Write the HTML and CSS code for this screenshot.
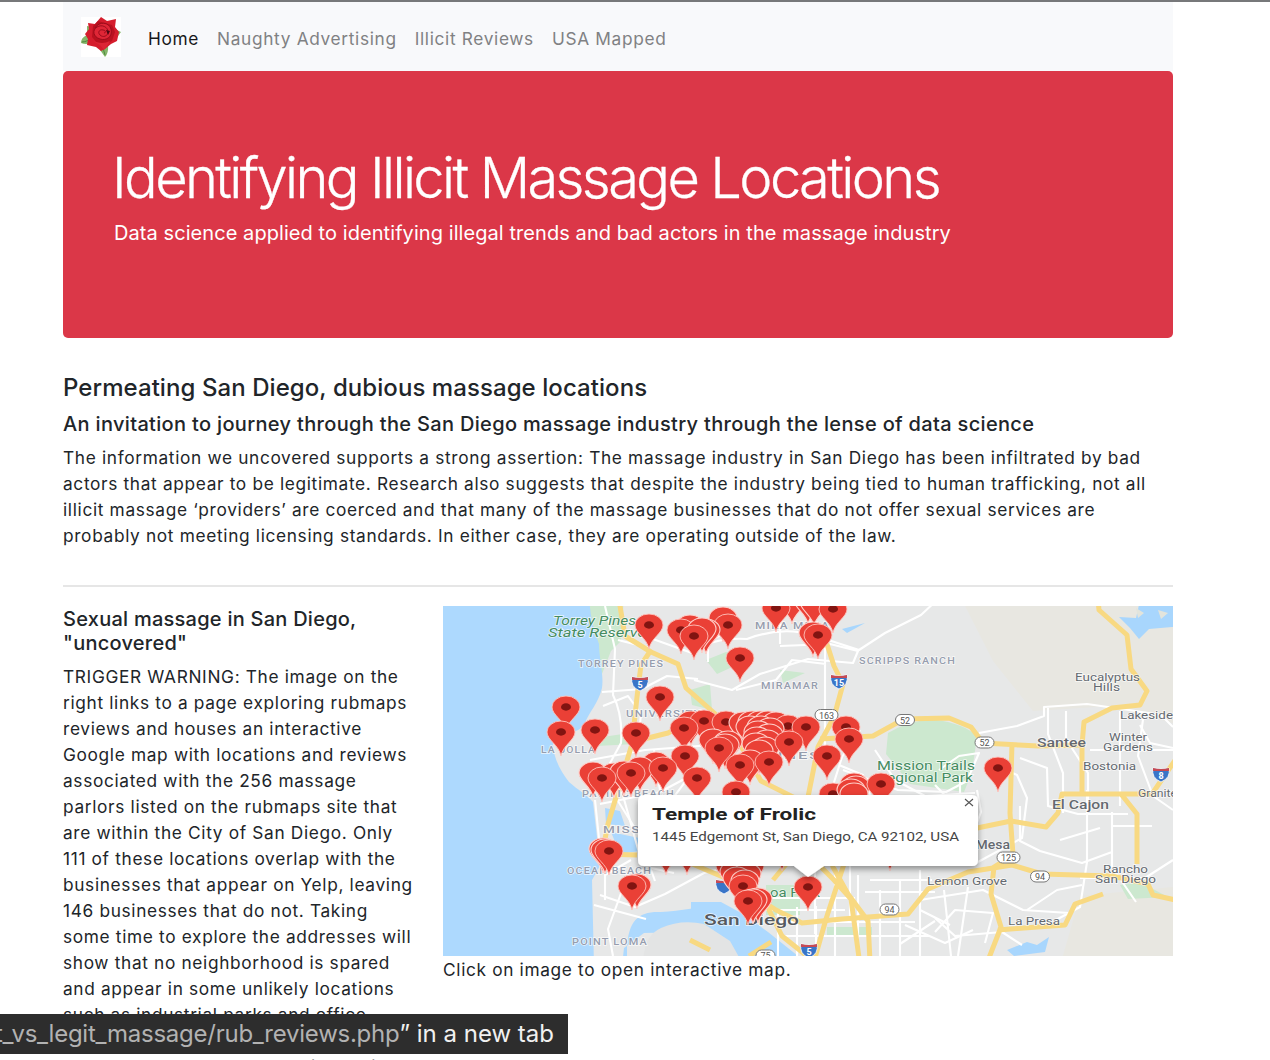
FILE: index.html
```html
<!DOCTYPE html>
<html lang="en">
<head>
<meta charset="utf-8">
<title>Identifying Illicit Massage Locations</title>
<link rel="stylesheet" href="styles.css">
</head>
<body>
<div class="container">
  <nav class="navbar">
    <a class="brand" href="#">
      <svg width="40" height="40" viewBox="0 0 40 40">
        <rect width="40" height="40" fill="#fff"/>
        <path d="M12 10 6 9l0 7 8 1zM10 18C5 17 0 21 0 26c5 2 10 1 13-3zM20 29l-1 4 5 7c4-4 3-11 3-13zM34 12l6 3-3 4-4-1z" fill="#86b66a"/>
        <path d="M1 25c4 0 7-2 10-5M22 31l2 7" stroke="#4d8a40" fill="none"/>
        <path d="M7 6l7 1 6-7 6 4 9-2-1 8 4 5-2 9-6 3-6 5-4 2-5-4-9-2 1-6-3-5 4-5z" fill="#d51d2d"/>
        <path d="M12 9l5-5 7 2 7 2 3 7-3 9-6 3-9-1-5-6z" fill="#b9111f"/>
        <path d="M14 11c4-7 14-6 16 1 2 8-5 12-11 10-7-2-8-9-3-12 5-3 11 0 11 5 0 4-5 6-8 3-3-3 0-6 3-5 3 0 3 3 1 3" fill="#df2636" stroke="#9b0c1b"/>
        <path d="M25 13l4 1-2 4z" fill="#4c0712"/>
        <path d="M12 24c5 2 11 3 17 0l-3 5-3 4-4-5z" fill="#dc2635"/>
      </svg>
    </a>
    <a class="link active" href="#">Home</a>
    <a class="link" href="#">Naughty Advertising</a>
    <a class="link" href="#">Illicit Reviews</a>
    <a class="link" href="#">USA Mapped</a>
  </nav>
  <header class="jumbotron">
    <h1>Identifying Illicit Massage Locations</h1>
    <p>Data science applied to identifying illegal trends and bad actors in the massage industry</p>
  </header>
  <section class="intro">
    <h2>Permeating San Diego, dubious massage locations</h2>
    <h3>An invitation to journey through the San Diego massage industry through the lense of data science</h3>
    <p>The information we uncovered supports a strong assertion: The massage industry in San Diego has been infiltrated by bad<br>actors that appear to be legitimate. Research also suggests that despite the industry being tied to human trafficking, not all<br>illicit massage ‘providers’ are coerced and that many of the massage businesses that do not offer sexual services are<br>probably not meeting licensing standards. In either case, they are operating outside of the law.</p>
  </section>
  <hr>
  <section class="row">
    <div class="story">
      <h3>Sexual massage in San Diego,<br>"uncovered"</h3>
      <p>TRIGGER WARNING: The image on the<br>right links to a page exploring rubmaps<br>reviews and houses an interactive<br>Google map with locations and reviews<br>associated with the 256 massage<br>parlors listed on the rubmaps site that<br>are within the City of San Diego. Only<br>111 of these locations overlap with the<br>businesses that appear on Yelp, leaving<br>146 businesses that do not. Taking<br>some time to explore the addresses will<br>show that no neighborhood is spared<br>and appear in some unlikely locations<br>such as industrial parks and office<br>buildings.<br>Lastly, the Yelp map and reviews will</p>
    </div>
    <figure class="map">
      <svg viewBox="443 606 730 350" width="730" height="350">
        <defs>
          <g id="pin"><path d="M0 24C-2 13-14 8-14 0a14 11 0 0 1 28 0C14 8 2 13 0 24z" fill="#ea4036" stroke="#ffc3bc" stroke-width=".9"/><ellipse rx="5" ry="3.7" fill="#811411"/></g>
          <g id="pinb"><path d="M0 24C-2 13-14 8-14 0a14 11 0 0 1 28 0C14 8 2 13 0 24z" fill="#ea4036" stroke="#ffd0ca" stroke-width="1.1"/></g>
          <g id="shield"><path d="M-8-6Q0-4 8-6Q10 4 0 8Q-10 4-8-6z" fill="#3975c8" stroke="#fff" stroke-width=".8"/><path d="M-8-6Q0-4 8-6V-3H-8z" fill="#c64a54"/></g>
          <filter id="shadow" x="-10%" y="-20%" width="120%" height="160%"><feDropShadow dx="0" dy="3" stdDeviation="3" flood-opacity=".4"/></filter>
        </defs>
        <g class="terrain">
        <rect x="433" y="596" width="750" height="370" fill="#e7e8e8"/>
        <path d="M960 596h223v130l-70-20-80 5-40-50zM1060 966l20-70 103-10v80z" fill="#e8e7e1"/>
        <g fill="#cce8cf">
          <path d="M588 596h36l-3 45-10 10-11 28-8-20z"/>
          <path d="M888 733q20-12 44-14 35 5 45 18l-5 35-8 20-54-8-24-30z"/>
          <path d="M706 660l20-8 26 6-35 16zM690 690l20-6 2 26-20-5zM596 738l40-6v12l-40 2z"/>
          <path d="M766 885h34v30h-34zM827 927h45v8h-45zM1120 885l20-3 28 15-40 2zM780 670l25 3-22 10z"/>
        </g>
        <path d="M433 596h156q1 25 10 48c0 15 5 30 3 44-4 16-13 24-17 35-5 12-30 11-32 18-1 15 8 31 16 41 9 8 17 12 24 20l4 35 5 25-10 18 2 86H433z" fill="#add9fe"/>
        <path d="M605 808l15 3 5 15-19-2zM611 832l28 6v13l-19 3zM627 966v-20c2-25 11-35 34-34 20-1 39-6 58-6l10 10 20 12 45 28v10h-60l-20-20-30-14-40 1-20 15-2 18z" fill="#add9fe"/>
        <path d="M691 902h30l22 12 25 18 30 24v10h-45l-28-28-34-13z" fill="#add9fe"/>
        <path d="M643 966q0-30 18-38 20-9 43-4l26 17 14 25z" fill="#e3e4e4"/>
        <path d="M1119 617l17 1 5-22h42v30l-34 3-10 10-9-11zM1007 950l20-8 10 3 12-8-4 15-31 4zM842 629l23-6-18 10z" fill="#a8d6fd"/>
        <path d="M1136 608l8 5-6 5zM1158 610l10 3-7 6z" fill="#e2e4dc"/>
        <g fill="none" stroke="#fff" stroke-width="2.1" stroke-linejoin="round">
          <path d="M605 606l10 43-2 46q10 20 8 48l-12 22 4 28 25 40 17 48M602 692l40-3 25-13 31 3M590 760l55-10 67-5M618 640l32 8M603 706l25-10 13 18-3 30"/>
          <path d="M650 638l42 15q20-16 55-14 34-13 66-4l46 15 26-17 36-18 16-15M694 680l38 10 28-16 48-15 45 4 5-12-28-7-50 2M780 644v-28l22-10M825 626v122M708 662v-20l25-14M736 690l40-10 16-20 34 4"/>
          <path d="M843 770l55 20 48 2 21-11 12-28-20 3-20 14M979 733l38-7 27-10v-9l43-3 42 6 32 5 12 12M1048 707v27l15 39v40M1066 711v28l22 34v38M1120 711v95M1144 712l-6 44 15 40 20 14M1090 750h83M1020 758l27 10 1 38 30 8h50M990 763l27 12 10 23-5 40-44 24"/>
          <path d="M1020 806v35l20 10 42 12 30-11v-26h40M1087 790v72l-7 45-26 14M1112 812v55l24 35M1080 878h65l28-18M920 900l63-10 40 20 46 3M935 918l20 18 47-4 20 13M944 890l7 66M968 887l-10 69M900 880v76M920 870v86M880 890v66M858 875v81M835 850v106M816 906v50M797 907v49M778 910v46M765 898h90M765 910h80M780 922h135M785 936h145M870 880h62M865 892h70M815 864v70M850 856v60M600 895l35 12 30-13 39-21 40-10M594 905l52 14M605 900v-25l26-15M613 956l-5-27 16-44 23-18 27 6M600 804l60-12 30-16M595 800l7 68M622 792l18 64M660 790l-6-40M693 771l-20 27M875 750l20 30 30 16 50-3M860 730l-18 27-12 38M839 765l24 10 7 20M960 776v20l-22 3"/>
          <path d="M935 932l20-22 38 3-8 30M920 910l30 15M905 925l40 18 28-13M900 944l35-23M977 790l4 22-6 16M935 785l20 21M1140 725l10 18 23 5M1060 840l40-12M1027 910l30-20 25-5"/>
        </g>
        <g fill="none" stroke="#f8d982" stroke-width="5" stroke-linejoin="round">
          <path d="M619 600l6 36 26 16 27 12 8 24 26 23 18 16 31 54 40 20 24 30 8 36 15 27 20 27 2 40"/>
          <path d="M651 650l-10 15-4 32-5 47-24 80-6 30 35 1M632 742l36-9 38-20M826 641l8 25 9 18-9 33-16 30-10 50-10 53-25 30"/>
          <path d="M820 739l53-3 31-17 45-1 22 9 12 16 55 3 44-1 2-23 28-14 28-3 7-14-16-22-4-34-28-25-1-11 10-17-5-12M1012 743l-2 70 3 42-19 12-3 27 10 33-14 36"/>
          <path d="M865 841l64-3 82-17 35 6 12-14 4-19h90l28-41M1082 745v48M1121 794l16 20v50M690 940l20 10M690 863l40 17 46 30 26 13 40-4 66-5 20-25 40-17 44-7 30 9 70 2 36 8 5 11 45 10 20-4M998 930l67-5 10-21 28-10"/>
          <path d="M804 850l30 30 17 19 9 66M844 864l-18 55-13 46M748 876l20 32 14 28 25 20M771 942l-22 14M735 780l24 30"/>
        </g>
        </g>
        <g class="map-label">
          <g class="park" font-style="italic"><text x="553" y="625" textLength="83">Torrey Pines</text><text x="548" y="636.5" textLength="98">State Reserve</text></g>
          <g class="park"><text x="877" y="770" textLength="98">Mission Trails</text><text x="887" y="781.5" textLength="86">egional Park</text><text x="770" y="897" textLength="50">oa Park</text></g>
          <g class="area">
            <text x="578" y="667" textLength="86">TORREY PINES</text><text x="626" y="717" textLength="76">UNIVERSITY</text><text x="541" y="753" textLength="55">LA JOLLA</text><text x="755" y="629" textLength="75">MIRA MESA</text><text x="859" y="664" textLength="97">SCRIPPS RANCH</text><text x="761" y="689" textLength="58">MIRAMAR</text><text x="582" y="797" textLength="93">PACIFIC BEACH</text><text x="603" y="833" textLength="65">MISSION</text><text x="567" y="874" textLength="85">OCEAN BEACH</text><text x="572" y="945" textLength="76">POINT LOMA</text><text x="767" y="759" textLength="54">LINES</text>
          </g>
          <g class="town"><text x="1075" y="680.5" textLength="65">Eucalyptus</text><text x="1093" y="690.5" textLength="27">Hills</text><text x="1120" y="718.5" textLength="53">Lakeside</text><text x="1109" y="741" textLength="38">Winter</text><text x="1103" y="751" textLength="50">Gardens</text><text x="1083" y="770" textLength="53">Bostonia</text><text x="1138" y="797" textLength="39">Granite</text><text x="1103" y="872.5" textLength="45">Rancho</text><text x="1095" y="882.5" textLength="61">San Diego</text><text x="927" y="885" textLength="80">Lemon Grove</text><text x="1008" y="925" textLength="52">La Presa</text></g>
          <g class="city"><text x="1037" y="747" textLength="49">Santee</text><text x="1052" y="809" textLength="57">El Cajon</text><text x="957" y="848.5" textLength="53">La Mesa</text></g>
          <text class="metro" x="704" y="925" textLength="95">San Diego</text>
        </g>
        <g class="route">
          <g><rect x="815" y="709.5" width="23" height="11" rx="5.5"/><text x="826.5" y="718.5">163</text></g>
          <g><rect x="895.5" y="714.5" width="19" height="11" rx="5.5"/><text x="905" y="723.5">52</text></g>
          <g><rect x="975" y="737" width="19" height="11" rx="5.5"/><text x="984.5" y="746">52</text></g>
          <g><rect x="997" y="852" width="23" height="11" rx="5.5"/><text x="1008.5" y="861">125</text></g>
          <g><rect x="1030.5" y="871" width="19" height="11" rx="5.5"/><text x="1040" y="880">94</text></g>
          <g><rect x="880" y="904" width="19" height="11" rx="5.5"/><text x="889.5" y="913">94</text></g>
          <g><rect x="756" y="950" width="19" height="11" rx="5.5"/><text x="765.5" y="959">75</text></g>
        </g>
        <g class="interstate"><use href="#shield" x="640" y="683"/><text x="640" y="688">5</text><use href="#shield" x="839" y="681"/><text x="839" y="686">15</text><use href="#shield" x="1161" y="774"/><text x="1161" y="779">8</text><use href="#shield" x="809" y="950"/><text x="809" y="955">5</text><use href="#shield" x="724" y="886"/></g>
        <g>
          <use href="#pinb" x="792" y="600"/><use href="#pinb" x="808" y="600"/><use href="#pinb" x="814" y="602"/><use href="#pin" x="776" y="608"/><use href="#pin" x="833" y="609"/>
          <use href="#pinb" x="723" y="618"/><use href="#pin" x="728" y="625"/><use href="#pinb" x="690" y="626"/><use href="#pin" x="681" y="630"/><use href="#pinb" x="706" y="630"/><use href="#pinb" x="702" y="629"/><use href="#pin" x="694" y="636"/>
          <use href="#pin" x="649" y="625"/><use href="#pinb" x="813" y="633"/><use href="#pin" x="818" y="635"/><use href="#pin" x="740" y="658"/><use href="#pin" x="660" y="697"/>
          <use href="#pin" x="566" y="707"/><use href="#pin" x="561" y="732"/><use href="#pin" x="595" y="730"/><use href="#pin" x="636" y="733"/>
          <use href="#pinb" x="691" y="722"/><use href="#pin" x="704" y="721"/><use href="#pin" x="684" y="728"/><use href="#pin" x="726" y="722"/>
          <use href="#pinb" x="743" y="723"/><use href="#pinb" x="752" y="722"/><use href="#pinb" x="760" y="722"/><use href="#pinb" x="768" y="722"/><use href="#pinb" x="776" y="723"/><use href="#pin" x="788" y="726"/>
          <use href="#pinb" x="750" y="727"/><use href="#pinb" x="761" y="727"/><use href="#pinb" x="770" y="729"/><use href="#pinb" x="758" y="732"/><use href="#pinb" x="769" y="735"/><use href="#pinb" x="757" y="738"/><use href="#pinb" x="767" y="741"/><use href="#pinb" x="756" y="744"/><use href="#pinb" x="765" y="748"/><use href="#pinb" x="759" y="751"/>
          <use href="#pin" x="806" y="727"/><use href="#pin" x="846" y="727"/><use href="#pin" x="849" y="739"/><use href="#pin" x="789" y="742"/>
          <use href="#pinb" x="713" y="740"/><use href="#pinb" x="728" y="742"/><use href="#pinb" x="725" y="745"/><use href="#pin" x="719" y="748"/><use href="#pinb" x="750" y="761"/><use href="#pin" x="740" y="765"/><use href="#pin" x="769" y="762"/><use href="#pin" x="827" y="756"/>
          <use href="#pin" x="685" y="756"/><use href="#pinb" x="656" y="763"/><use href="#pinb" x="640" y="768"/><use href="#pin" x="663" y="768"/><use href="#pinb" x="593" y="773"/><use href="#pinb" x="614" y="774"/><use href="#pinb" x="624" y="772"/><use href="#pin" x="631" y="773"/><use href="#pin" x="602" y="778"/><use href="#pin" x="697" y="778"/>
          <use href="#pin" x="736" y="792"/><use href="#pin" x="833" y="794"/><use href="#pinb" x="854" y="784"/><use href="#pinb" x="856" y="787"/><use href="#pinb" x="851" y="790"/><use href="#pinb" x="854" y="794"/><use href="#pin" x="881" y="784"/><use href="#pin" x="998" y="768"/>
          <use href="#pinb" x="603" y="849"/><use href="#pinb" x="605" y="850"/><use href="#pin" x="609" y="851"/><use href="#pinb" x="637" y="885"/><use href="#pin" x="632" y="886"/>
          <use href="#pinb" x="666" y="851"/><use href="#pinb" x="687" y="851"/><use href="#pinb" x="782" y="847"/><use href="#pinb" x="890" y="847"/>
          <use href="#pinb" x="730" y="866"/><use href="#pinb" x="750" y="866"/><use href="#pinb" x="734" y="872"/><use href="#pinb" x="747" y="874"/><use href="#pinb" x="737" y="878"/><use href="#pinb" x="745" y="881"/><use href="#pin" x="743" y="886"/><use href="#pinb" x="758" y="899"/><use href="#pinb" x="753" y="900"/><use href="#pin" x="748" y="901"/><use href="#pin" x="808" y="887"/>
        </g>
        <path filter="url(#shadow)" d="M644 795H972q6 0 6 6V860q0 6-6 6H824L808 877 794 866H644q-6 0-6-6V801q0-6 6-6z" fill="#fff"/>
        <g class="popup"><text class="title" x="652" y="820" textLength="164">Temple of Frolic</text><text class="addr" x="652" y="840.5" textLength="307">1445 Edgemont St, San Diego, CA 92102, USA</text></g>
        <path d="M965 799l8 7M973 799l-8 7" stroke="#555" stroke-width="1.1"/>
      </svg>
      <figcaption>Click on image to open interactive map.</figcaption>
    </figure>
  </section>
</div>
<div class="status"><span>t_vs_legit_massage/rub_reviews.php</span>” in a new tab</div>
<script src="labels.js"></script>
</body>
</html>
```
FILE: labels.js
```js
// Map labels stretch their glyphs horizontally to fill their assigned length.
document.querySelectorAll('text[textLength]').forEach(function (label) {
  label.setAttribute('lengthAdjust', 'spacingAndGlyphs');
});
```
FILE: styles.css
```css
* { box-sizing: border-box; }
html { height: 1060px; overflow: hidden; }
body { margin: 0; height: 1060px; overflow: hidden; border-top: 2px solid #77787a; background: #fff; color: #212529; font-family: Inter, "Liberation Sans", sans-serif; font-size: 17.3px; line-height: 26px; letter-spacing: .66px; white-space: nowrap; }
h1, h2, h3, p, figure { margin: 0; }
.container { width: 1110px; margin-left: 63px; }
.navbar { display: flex; align-items: center; height: 69px; padding: 4px 18px 0; background: #f8f9fb; }
.brand { display: block; height: 40px; margin: -3px 27px 0 0; }
.brand svg { display: block; }
.link { margin-right: 18px; color: #808183; text-decoration: none; }
.link.active { color: #17181a; }
.jumbotron { height: 267px; padding: 74px 49px 0; background: #db3748; border-radius: 5px; color: #fff; }
h1 { font-size: 56px; font-weight: 300; line-height: 67px; letter-spacing: -2.63px; -webkit-text-stroke: .3px #fff; }
.jumbotron p { margin: 5px 0 0 2px; font-size: 20px; line-height: 32px; letter-spacing: .07px; }
.intro { padding-top: 35px; }
h2 { font-size: 24px; font-weight: 500; line-height: 30px; letter-spacing: .07px; }
h3 { font-size: 20px; font-weight: 500; line-height: 24px; letter-spacing: .33px; }
.story h3 { letter-spacing: .25px; margin-bottom: 9px; }
.intro h3 { margin: 9px 0; }
hr { height: 2px; margin: 36px 0 19px; border: 0; background: #e6e6e6; }
.row { display: flex; gap: 30px; }
.story { width: 350px; padding-top: 1px; }
.map svg { display: block; }
.map figcaption { padding-top: 1px; }
.terrain { filter: blur(.5px); }
.map-label text { paint-order: stroke; stroke: rgba(255, 255, 255, .75); stroke-width: 1.3px; }
svg text { font-family: Roboto, sans-serif; letter-spacing: 0; }
.park { font-size: 12px; fill: #458c61; }
.area { font-size: 8.5px; font-weight: 500; fill: #969dae; }
.area text { letter-spacing: .9px; }
.town { font-size: 10px; fill: #646970; }
.city { font-size: 12px; font-weight: 500; fill: #656970; }
.metro { font-size: 15px; font-weight: 500; fill: #565a60; }
.route rect { fill: #fff; stroke: #777; }
.route text { font-size: 9px; fill: #555; text-anchor: middle; }
.interstate text { font-size: 9px; font-weight: 700; fill: #fff; text-anchor: middle; }
.popup .title { font-size: 17px; font-weight: 700; fill: #222; }
.popup .addr { font-size: 12px; fill: #444; }
.status { position: absolute; left: 0; top: 1014px; width: 568px; height: 40px; padding-right: 14px; background: #2d2d2d; color: #f1f1f1; font-size: 24px; line-height: 40px; letter-spacing: 0; display: flex; justify-content: flex-end; overflow: hidden; white-space: pre; }
.status span { color: #b2b2b2; letter-spacing: -.25px; }
```
